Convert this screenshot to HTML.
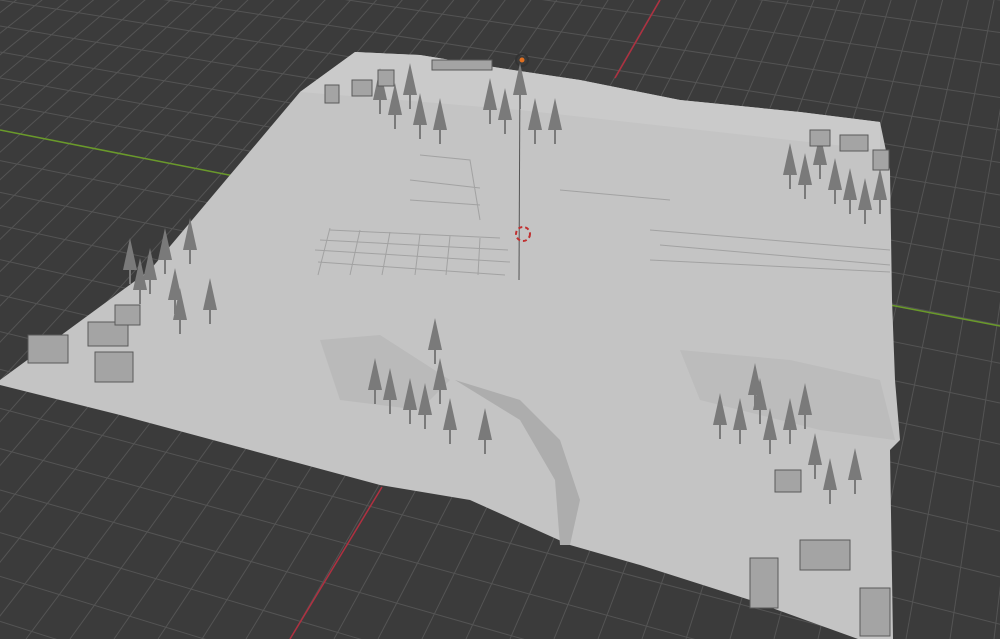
<!DOCTYPE html>
<html><head><meta charset="utf-8"><style>
html,body{margin:0;padding:0;background:#3b3b3b;overflow:hidden;width:1000px;height:639px}
svg{display:block}
</style></head><body>
<svg id="s" width="1000" height="639" viewBox="0 0 1000 639" xmlns="http://www.w3.org/2000/svg">
<rect width="1000" height="639" fill="#3b3b3b"/>
<g id="grid" stroke="#545454" stroke-width="1"></g>
<line x1="0" y1="130" x2="300" y2="189" stroke="#6a9a2a" stroke-width="1.5"/>
<line x1="890" y1="305" x2="1000" y2="326" stroke="#6a9a2a" stroke-width="1.5"/>
<line x1="660" y1="0" x2="615" y2="78" stroke="#b03040" stroke-width="1.5"/>
<line x1="382" y1="487" x2="290" y2="639" stroke="#b03040" stroke-width="1.5"/>
<path d="M355,52 L420,55 L500,68 L580,80 L680,100 L800,112 L880,122 L890,170 L892,300 L895,380 L900,440 L890,450 L893,639 L858,639 L750,600 L640,565 L570,545 L470,500 L380,485 L250,450 L120,415 L0,385 L0,380 L150,270 L300,92 Z" fill="#c4c4c4"/>
<path d="M300,92 L355,52 L420,55 L500,68 L580,80 L680,100 L800,112 L880,122 L880,150 L700,130 L520,110 L400,100 Z" fill="#cacaca"/>
<path d="M320,340 L380,335 L450,380 L420,410 L340,400 Z" fill="#bababa"/>
<path d="M680,350 L790,360 L880,380 L895,440 L820,430 L700,400 Z" fill="#bcbcbc"/>
<path d="M455,380 L520,400 L560,440 L580,500 L570,545 L560,545 L555,480 L520,420 Z" fill="#adadad"/>
<g stroke="#a2a2a2" stroke-width="1" fill="none">
<path d="M315,250 L510,262 M318,262 L505,275 M320,240 L508,250 M330,230 L500,238"/>
<path d="M330,228 L318,275 M360,230 L350,275 M390,232 L382,275 M420,234 L415,275 M450,236 L446,275 M480,238 L478,275"/>
<path d="M560,190 L670,200 M650,230 L890,250 M660,245 L890,265 M650,260 L890,272"/>
<path d="M420,155 L470,160 L480,220 M410,180 L480,188 M410,200 L480,205"/>
</g>
<line x1="520" y1="65" x2="519" y2="280" stroke="#555" stroke-width="1"/>
<circle cx="522" cy="60" r="6" fill="none" stroke="#333" stroke-width="2"/>
<circle cx="522" cy="60" r="2.5" fill="#e07020"/>
<circle cx="523" cy="234" r="7" fill="none" stroke="#c03030" stroke-width="2" stroke-dasharray="4 3"/>
<g id="trees" fill="#7a7a7a"></g>
<g fill="#a4a4a4" stroke="#5a5a5a" stroke-width="1">
<rect x="28" y="335" width="40" height="28"/><rect x="88" y="322" width="40" height="24"/><rect x="95" y="352" width="38" height="30"/>
<rect x="115" y="305" width="25" height="20"/><rect x="325" y="85" width="14" height="18"/><rect x="352" y="80" width="20" height="16"/><rect x="378" y="70" width="16" height="16"/>
<rect x="810" y="130" width="20" height="16"/><rect x="840" y="135" width="28" height="16"/><rect x="873" y="150" width="16" height="20"/>
<rect x="775" y="470" width="26" height="22"/><rect x="800" y="540" width="50" height="30"/><rect x="750" y="558" width="28" height="50"/><rect x="860" y="588" width="30" height="48"/>
<rect x="432" y="60" width="60" height="10"/>
</g>
</svg>
<script>
var g=document.getElementById('grid'),ns='http://www.w3.org/2000/svg';
function L(x1,y1,x2,y2){var l=document.createElementNS(ns,'line');l.setAttribute('x1',x1);l.setAttribute('y1',y1);l.setAttribute('x2',x2);l.setAttribute('y2',y2);g.appendChild(l);}
for(var k=-20;k<40;k++){var y0=130+k*30*(1+0.02*k);if(k<0)y0=130+k*26;var s=(y0+650)/4000;L(0,y0,1000,y0+s*1000);}
for(var k=-30;k<30;k++){var x0=290+k*44;L(x0,639,1180,-900);}
var t=document.getElementById('trees');
var pts=[[130,270],[150,280],[165,260],[190,250],[175,300],[180,320],[210,310],[140,290],[380,100],[395,115],[410,95],[420,125],[440,130],[490,110],[505,120],[520,95],[535,130],[555,130],[790,175],[805,185],[820,165],[835,190],[850,200],[865,210],[880,200],[375,390],[390,400],[410,410],[425,415],[440,390],[450,430],[485,440],[435,350],[720,425],[740,430],[755,395],[770,440],[790,430],[805,415],[815,465],[830,490],[855,480],[760,410]];
pts.forEach(function(p){var x=p[0],y=p[1];var e=document.createElementNS(ns,'path');e.setAttribute('d','M'+x+','+(y-32)+' L'+(x+7)+','+y+' L'+(x+1)+','+y+' L'+(x+1)+','+(y+14)+' L'+(x-1)+','+(y+14)+' L'+(x-1)+','+y+' L'+(x-7)+','+y+' Z');t.appendChild(e);});
</script>
</body></html>
